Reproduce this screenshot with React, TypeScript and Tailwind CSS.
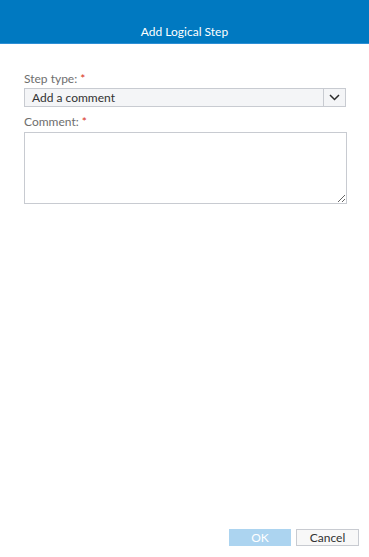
export default function App() {
  return (
    <div className="w-[369px] h-[557px] bg-white flex flex-col" style={{ fontFamily: 'Lato, "Noto Sans", sans-serif' }}>
      {/* Header */}
      <header className="h-[44px] shrink-0 bg-[#0079c1] border-b border-[#2d8fd5] flex items-end justify-center pb-[5px]">
        <h1 className="text-[12px] text-white leading-none">Add Logical Step</h1>
      </header>

      {/* Form */}
      <div className="flex-1 px-[24px] pt-[29px] flex flex-col">
        <label className="text-[12px] text-[#6e6e6e] leading-none h-[14px]">
          Step type: <span className="text-[#d83020]">*</span>
        </label>
        <div className="mt-[1px] h-[19px] w-[322px] flex border border-[#c8cbd1] bg-[#f4f5f7]">
          <div className="flex-1 px-[7px] text-[12px] text-[#323232] leading-[17px]">Add a comment</div>
          <div className="w-[22px] border-l border-[#c8cbd1] flex items-center justify-center">
            <svg width="11" height="7" viewBox="0 0 11 7" fill="none">
              <path d="M1 1l4.5 4.5L10 1" stroke="#2b2b2b" strokeWidth="1.5" />
            </svg>
          </div>
        </div>
        <label className="mt-[9px] text-[12px] text-[#6e6e6e] leading-none h-[14px]">
          Comment: <span className="text-[#d83020]">*</span>
        </label>
        <textarea className="mt-[2px] h-[72px] w-[323px] border border-[#c8cbd1] bg-white resize-y outline-none" />
      </div>

      {/* Footer */}
      <div className="h-[17px] mb-[11px] flex justify-end gap-[5px] pr-[10px]">
        <button className="w-[62px] h-[17px] bg-[#acd4f0] text-white text-[12px] leading-none">OK</button>
        <button className="w-[63px] h-[17px] bg-[#f8f8f8] border border-[#c8cbd1] text-[#323232] text-[12px] leading-none">Cancel</button>
      </div>
    </div>
  );
}
